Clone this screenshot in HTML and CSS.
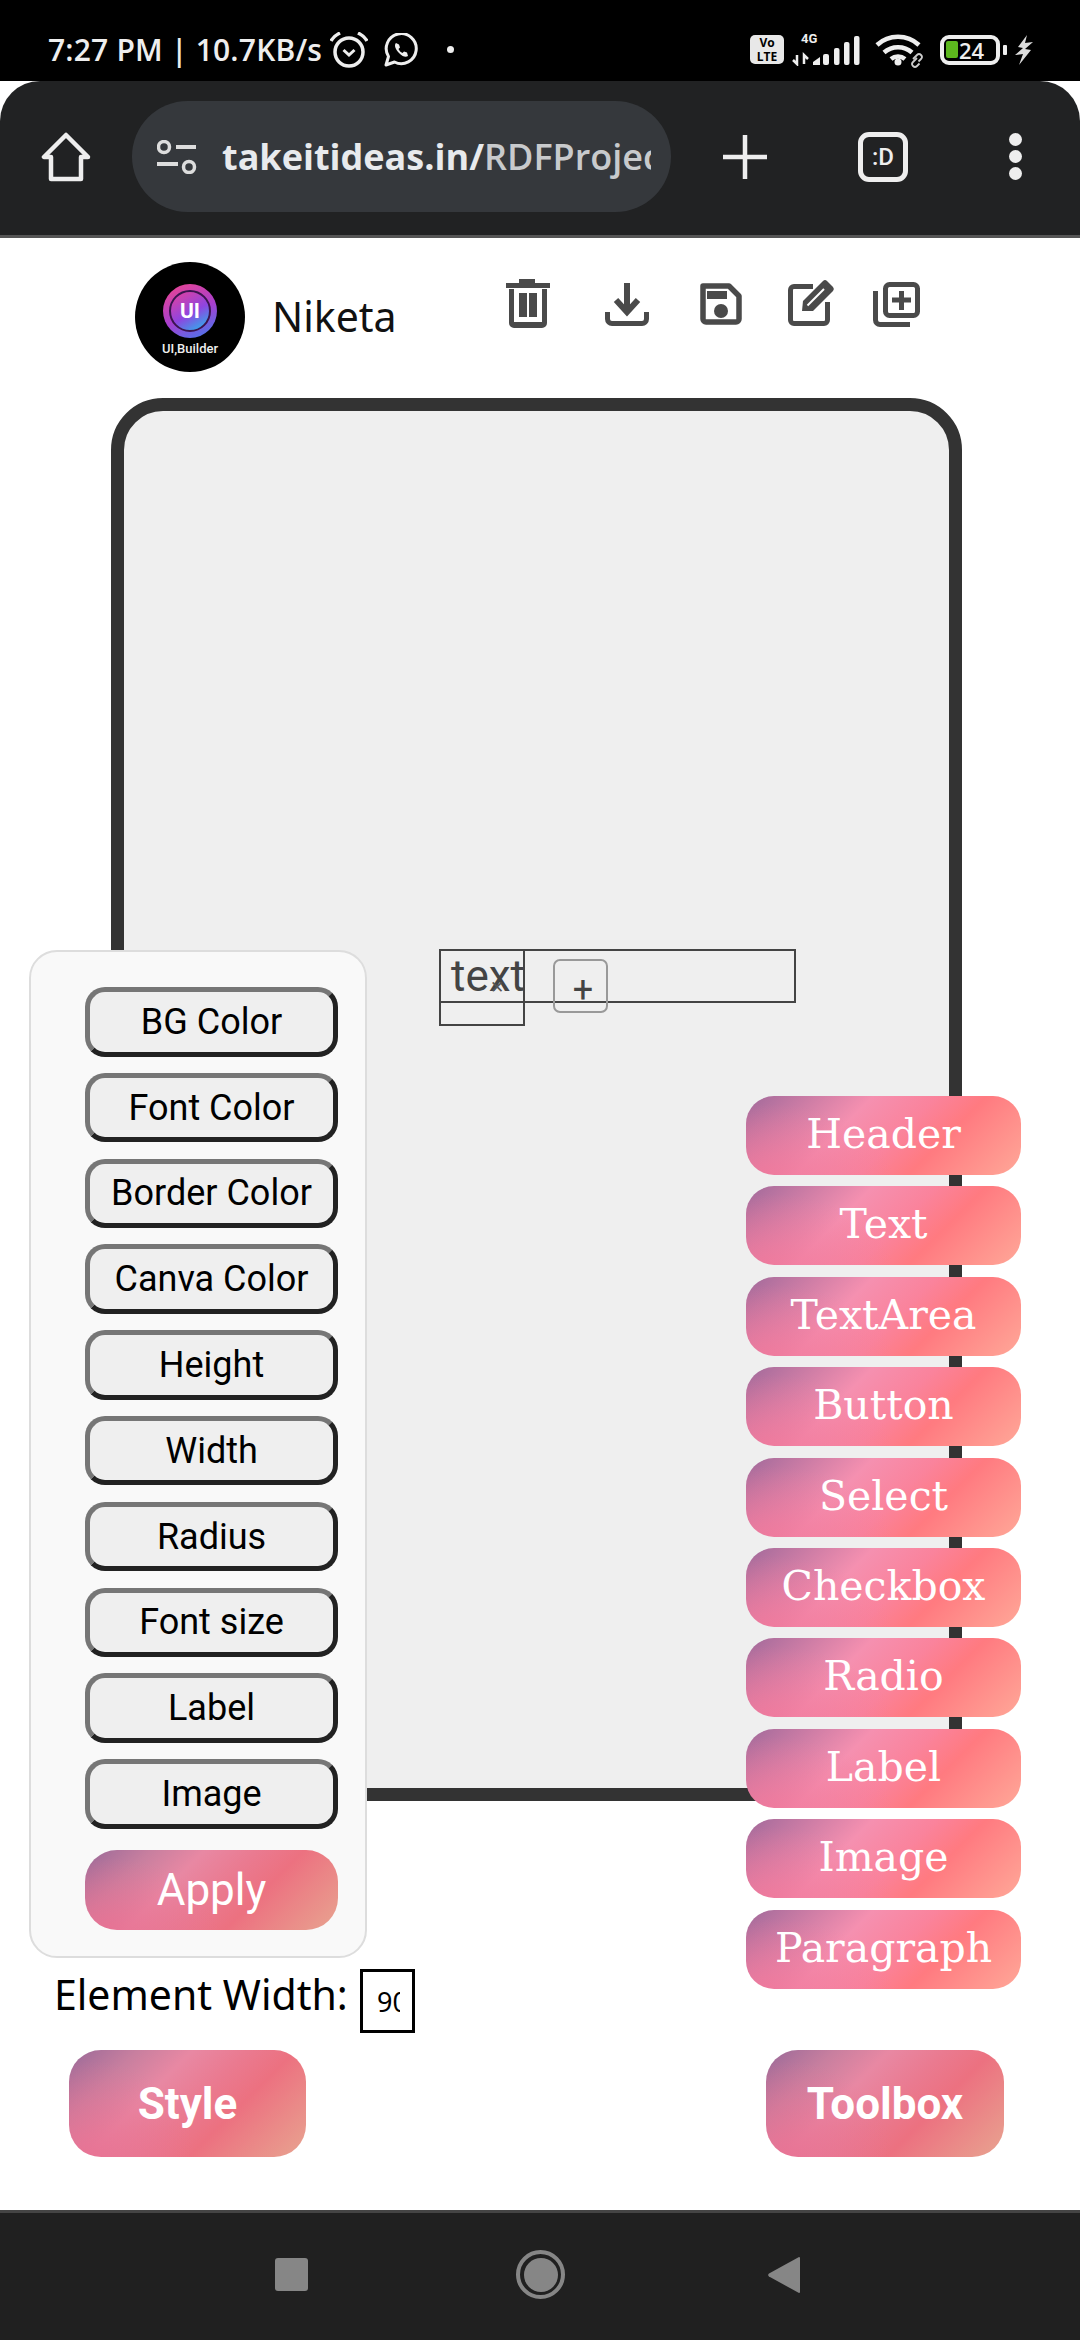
FILE: index.html
```html
<!DOCTYPE html>
<html>
	<head>
		<meta charset="UTF-8">
		<title>UI Builder</title>
		<link rel="stylesheet" href="styles.css">
	</head>
	<body>
		<div class="status">
			<div class="status-left">
				<span class="status-text">7:27 PM | 10.7KB/s</span>
				<svg class="ic-alarm" viewBox="0 0 38 36" width="38" height="36"><circle cx="19" cy="20" r="14" fill="none" stroke="#eee" stroke-width="3.500"/><path d="M13.500 18l5.500 5 5.500-5" fill="none" stroke="#eee" stroke-width="3"/><path d="M1 9C3 5 6 3 10 1M37 9C35 5 32 3 28 1" stroke="#eee" stroke-width="3.500" fill="none"/></svg>
				<svg class="ic-wa" viewBox="0 0 34 34" width="34" height="34"><path d="M2 32l2.500-8.500A15 15 0 1 1 10.500 29z" fill="none" stroke="#eee" stroke-width="3" stroke-linejoin="round"/><path d="M12 10c-2 2-1 6 3 10s7 4.500 9 3l-1-3.500-3-1-1.500 1.500c-2-1-3-2-4-4l1.500-1.500-1-3z" fill="#eee"/></svg>
				<span class="status-dot"></span>
			</div>
			<div class="status-right">
				<span class="volte"><span>Vo</span><span>LTE</span></span>
				<div class="signal">
					<span class="net">4G</span>
					<svg viewBox="0 0 70 32" width="70" height="32"><path d="M5 21v9L1 26M5 21v9M12 30v-9l4 4" stroke="#eee" stroke-width="2.500" fill="none"/><path d="M21 31v-3l7-5v8z" fill="#eee"/><rect x="31" y="20" width="6" height="11" rx="2" fill="#eee"/><rect x="42" y="14" width="5.500" height="17" rx="2" fill="#eee"/><rect x="52" y="8" width="5.500" height="23" rx="2" fill="#eee"/><rect x="62" y="2" width="5.500" height="29" rx="2" fill="#eee"/></svg>
				</div>
				<svg class="ic-wifi" viewBox="0 0 50 36" width="50" height="36"><path d="M2 13a31 31 0 0 1 42 0M9 20.500a21 21 0 0 1 28 0M16 27a11 11 0 0 1 14 0" fill="none" stroke="#eee" stroke-width="4.500"/><circle cx="23" cy="30" r="3.500" fill="#eee"/><path d="M38 27l4-4a2.800 2.800 0 0 1 4 4l-2.500 2.500M42 26l-4 4a2.800 2.800 0 0 0 4 4l2.500-2.500" fill="none" stroke="#ccc" stroke-width="1.800"/></svg>
				<div class="battery"><span class="battery-fill"></span><span class="battery-num">24</span></div>
				<span class="battery-nub"></span>
				<svg class="ic-bolt" viewBox="0 0 18 30" width="18" height="30"><path d="M12 0L3 12l5 1-8 7 8-1-4 11L16 15l-6-1 8-7-8 1z" fill="#ddd"/></svg>
			</div>
		</div>

		<div class="toolbar">
			<svg class="ic-home" viewBox="0 0 50 50" width="50" height="50"><path d="M25 3L3 25h7v22h30V25h7z" fill="none" stroke="#eee" stroke-width="4.500" stroke-linejoin="round"/></svg>
			<div class="urlbar">
				<svg class="ic-tune" viewBox="0 0 40 34" width="40" height="34"><circle cx="7" cy="7" r="5.500" fill="none" stroke="#ddd" stroke-width="3.500"/><path d="M19 7h20M0 24h21" stroke="#ddd" stroke-width="4"/><circle cx="32" cy="27" r="5.500" fill="none" stroke="#ddd" stroke-width="3.500"/></svg>
				<div class="url"><b>takeitideas.in/</b>RDFProject/index.html</div>
			</div>
			<svg class="ic-plus" viewBox="0 0 44 44" width="44" height="44"><path d="M22 0v44M0 22h44" stroke="#eee" stroke-width="4.500"/></svg>
			<div class="tabs">:D</div>
			<div class="dots"><span></span><span></span><span></span></div>
		</div>

		<div class="head">
			<div class="logo">
				<div class="logo-ring"><span>UI</span></div>
				<div class="logo-name">UI,Builder</div>
			</div>
			<div class="name">Niketa</div>
			<div class="actions">
				<svg class="act-trash" viewBox="0 0 44 49" width="44" height="49"><path d="M13 4V0h16v4h15v5H0V4z" fill="#4a4a4a"/><path d="M3 10v34a5 5 0 0 0 5 5h28a5 5 0 0 0 5-5V10h-5v33H8V10z" fill="#4a4a4a"/><path d="M13 14h8v24h-8zM23 14h8v24h-8z" fill="#4a4a4a"/></svg>
				<svg class="act-down" viewBox="0 0 44 43" width="44" height="43"><path d="M22 0v28M11 17l11 12 11-12" fill="none" stroke="#4a4a4a" stroke-width="6"/><path d="M2.500 29v7a4.500 4.500 0 0 0 4.500 4.500h30a4.500 4.500 0 0 0 4.500-4.500v-7" fill="none" stroke="#4a4a4a" stroke-width="5"/></svg>
				<svg class="act-save" viewBox="0 0 42 42" width="42" height="42"><path d="M3 3h26l10 10v23a3 3 0 0 1-3 3H6a3 3 0 0 1-3-3z" fill="none" stroke="#4a4a4a" stroke-width="5.500" stroke-linejoin="round"/><path d="M7 8h20v8H7z" fill="#4a4a4a"/><circle cx="21" cy="28" r="7" fill="#4a4a4a"/></svg>
				<svg class="act-edit" viewBox="0 0 48 48" width="48" height="48"><path d="M25 7.500H6A3.500 3.500 0 0 0 2.500 11v30A3.500 3.500 0 0 0 6 44.500h30a3.500 3.500 0 0 0 3.500-3.500V23" fill="none" stroke="#4a4a4a" stroke-width="5"/><path d="M14 32l1-10L35 2a3 3 0 0 1 4 0l6 6a3 3 0 0 1 0 4L25 32z" fill="#4a4a4a"/><path d="M19.500 26.500L36 10" stroke="#fff" stroke-width="2"/></svg>
				<svg class="act-copy" viewBox="0 0 47 45" width="47" height="45"><path d="M2.500 9v29a4.500 4.500 0 0 0 4.500 4.500h30" fill="none" stroke="#4a4a4a" stroke-width="5"/><rect x="12.500" y="2.500" width="32" height="31" rx="4" fill="none" stroke="#4a4a4a" stroke-width="5"/><path d="M28.500 9v19M19 18h19" stroke="#4a4a4a" stroke-width="5"/></svg>
			</div>
		</div>

		<div class="stage">
			<div class="canva">
				<div class="el el-wide"></div>
				<div class="el el-text">text</div>
				<span class="el-close">&#x2715;</span>
				<button class="el-add">+</button>
			</div>

			<div class="style-panel">
				<button class="opt">BG Color</button>
				<button class="opt">Font Color</button>
				<button class="opt">Border Color</button>
				<button class="opt">Canva Color</button>
				<button class="opt">Height</button>
				<button class="opt">Width</button>
				<button class="opt">Radius</button>
				<button class="opt">Font size</button>
				<button class="opt">Label</button>
				<button class="opt">Image</button>
				<button class="apply dim">Apply</button>
			</div>

			<div class="toolbox">
				<div class="tool grad">Header</div>
				<div class="tool grad">Text</div>
				<div class="tool grad">TextArea</div>
				<div class="tool grad">Button</div>
				<div class="tool grad">Select</div>
				<div class="tool grad">Checkbox</div>
				<div class="tool grad">Radio</div>
				<div class="tool grad">Label</div>
				<div class="tool grad">Image</div>
				<div class="tool grad">Paragraph</div>
			</div>
		</div>

		<div class="width-row">
			<label class="width-label">Element Width:</label>
			<input class="width-input" type="text" value="90">
		</div>

		<div class="foot">
			<button class="big dim">Style</button>
			<button class="big big-tool dim">Toolbox</button>
		</div>

		<div class="nav">
			<span class="nav-square"></span>
			<span class="nav-home"><span></span></span>
			<svg viewBox="0 0 32 38" width="32" height="38"><path d="M31 1a1 1 0 0 1 1 1v34a1 1 0 0 1-1 1L1 20.500a2 2 0 0 1 0-3z" fill="#868686"/></svg>
		</div>
	</body>
</html>
```

FILE: styles.css
```css
html, body {
	margin: 0;
	padding: 0;
}
body {
	width: 1080px;
	height: 2340px;
	overflow: hidden;
	background: #fff;
	font-family: Roboto, "Noto Sans", sans-serif;
	position: relative;
}
button {
	font-family: inherit;
	cursor: pointer;
}
svg {
	flex-shrink: 0;
}

/* status bar */
.status {
	height: 81px;
	background: #000;
	display: flex;
	justify-content: space-between;
	align-items: center;
	padding: 18px 47px 0 48px;
	box-sizing: border-box;
	color: #eee;
}
.status-left, .status-right {
	display: flex;
	align-items: center;
}
.status-text {
	font-family: "Open Sans", sans-serif;
	font-weight: 600;
	font-size: 30px;
	letter-spacing: 0.2px;
	width: 282px;
	white-space: nowrap;
}
.ic-wa {
	margin-left: 16px;
}
.status-dot {
	width: 7px;
	height: 7px;
	border-radius: 50%;
	background: #eee;
	margin-left: 29px;
}
.volte {
	width: 34px;
	height: 29px;
	background: #e8e8e8;
	color: #000;
	border-radius: 5px;
	font-family: "Open Sans", sans-serif;
	font-size: 12px;
	font-weight: 700;
	line-height: 14px;
	display: flex;
	flex-direction: column;
	align-items: center;
	justify-content: center;
}
.signal {
	margin-left: 8px;
	position: relative;
	height: 32px;
}
.net {
	position: absolute;
	left: 9px;
	top: -2px;
	font-size: 13px;
	line-height: 14px;
	font-weight: 700;
}
.ic-wifi {
	margin-left: 13px;
}
.battery {
	width: 60px;
	height: 30px;
	margin-left: 15px;
	border: 4px solid #eee;
	border-radius: 9px;
	box-sizing: border-box;
	display: flex;
	align-items: center;
	padding-left: 2px;
}
.battery-fill {
	width: 12px;
	height: 17px;
	background: #5cb81e;
	border-radius: 2px;
}
.battery-num {
	font-family: "Open Sans", sans-serif;
	font-size: 22px;
	font-weight: 600;
	margin-left: 1px;
}
.battery-nub {
	width: 4px;
	height: 10px;
	background: #eee;
	border-radius: 1px;
	margin-left: 3px;
}
.ic-bolt {
	margin-left: 8px;
}

/* browser toolbar */
.toolbar {
	height: 157px;
	background: #212223;
	border-radius: 40px 40px 0 0;
	border-bottom: 3px solid #555;
	box-sizing: border-box;
	display: flex;
	align-items: center;
	padding-bottom: 3px;
	padding-left: 41px;
}
.urlbar {
	width: 539px;
	height: 111px;
	margin-left: 41px;
	background: #35383c;
	border-radius: 56px;
	display: flex;
	align-items: center;
	padding: 0 20px 0 25px;
	box-sizing: border-box;
	flex-shrink: 0;
}
.url {
	margin-left: 25px;
	min-width: 0;
	font-family: "Open Sans", sans-serif;
	font-size: 36px;
	font-weight: 600;
	color: #c8cacc;
	white-space: nowrap;
	overflow: hidden;
}
.url b {
	color: #e8eaed;
	font-weight: 700;
}
.ic-plus {
	margin-left: 52px;
}
.tabs {
	width: 50px;
	height: 50px;
	margin-left: 91px;
	border: 5px solid #eee;
	border-radius: 11px;
	box-sizing: border-box;
	color: #eee;
	font-size: 24px;
	font-weight: 500;
	display: flex;
	align-items: center;
	justify-content: center;
}
.dots {
	margin-left: 101px;
	display: flex;
	flex-direction: column;
	gap: 4px;
}
.dots span {
	width: 13px;
	height: 13px;
	border-radius: 50%;
	background: #eee;
}

/* page head */
.head {
	height: 160px;
	display: flex;
	align-items: flex-start;
	padding-left: 135px;
	box-sizing: border-box;
}
.logo {
	width: 110px;
	height: 110px;
	margin-top: 24px;
	background: #000;
	border-radius: 50%;
	display: flex;
	flex-direction: column;
	align-items: center;
	padding-top: 22px;
	box-sizing: border-box;
}
.logo-ring {
	width: 54px;
	height: 54px;
	border-radius: 50%;
	background: linear-gradient(155deg, #f0458c, #a63fd0 55%, #3a7ff0);
	display: flex;
	align-items: center;
	justify-content: center;
	flex-shrink: 0;
}
.logo-ring span {
	width: 42px;
	height: 42px;
	border-radius: 50%;
	border: 2px solid #3b1450;
	box-sizing: border-box;
	background: linear-gradient(150deg, #e8409a, #8e45e0 55%, #1fc0ee);
	color: #fff;
	font-size: 21px;
	font-weight: 700;
	line-height: 38px;
	text-align: center;
}
.logo-name {
	color: #eee;
	font-size: 13px;
	font-weight: 500;
	line-height: 16px;
	margin-top: 3px;
	white-space: nowrap;
}
.name {
	width: 130px;
	margin-left: 27px;
	margin-top: 50px;
	font-family: "Noto Sans", sans-serif;
	font-size: 41px;
	color: #111;
}
.actions {
	margin-left: 104px;
	margin-top: 41px;
	display: flex;
	align-items: flex-start;
}
.act-down {
	margin-left: 55px;
	margin-top: 4px;
}
.act-save {
	margin-left: 51px;
	margin-top: 4px;
}
.act-edit {
	margin-left: 46px;
}
.act-copy {
	margin-left: 37px;
	margin-top: 3px;
}

/* canvas + floating panels */
.stage {
	position: relative;
	height: 1560px;
}
.canva {
	position: absolute;
	left: 111px;
	top: 0;
	width: 851px;
	height: 1403px;
	border: 13px solid #333;
	border-radius: 52px;
	background: #efefef;
	box-sizing: border-box;
}
.el {
	position: absolute;
	border: 2px solid #444;
	box-sizing: border-box;
	color: #444;
}
.el-wide {
	left: 315px;
	top: 538px;
	width: 357px;
	height: 54px;
}
.el-text {
	left: 315px;
	top: 538px;
	width: 86px;
	height: 77px;
	font-size: 44px;
	line-height: 50px;
	padding-left: 10px;
	white-space: nowrap;
}
.el-close {
	position: absolute;
	left: 366px;
	top: 566px;
	font-family: "DejaVu Sans", sans-serif;
	font-size: 17px;
	line-height: 20px;
	color: #555;
}
.el-add {
	position: absolute;
	left: 429px;
	top: 548px;
	width: 55px;
	height: 54px;
	padding: 8px 0 0 5px;
	border: 2px solid #999;
	border-radius: 7px;
	background: transparent;
	color: #444;
	font-size: 36px;
	line-height: 40px;
}

.style-panel {
	position: absolute;
	left: 29px;
	top: 552px;
	width: 338px;
	height: 1008px;
	background: #f9f9f9;
	border: 2px solid #ddd;
	border-radius: 28px;
	box-sizing: border-box;
	padding: 35px 27px 0 54px;
	display: flex;
	flex-direction: column;
	gap: 16.300px;
}
.opt {
	height: 69.500px;
	flex-shrink: 0;
	padding: 0;
	background: #efefef;
	border: 5px solid;
	border-color: #767676 #222 #222 #767676;
	border-radius: 20px;
	color: #000;
	font-size: 36px;
}

/* the pink band that every coloured button has */
.grad {
	background:
		radial-gradient(ellipse 45% 90% at 8% 100%, rgba(240, 120, 155, 0.85), rgba(240, 120, 155, 0)),
		linear-gradient(135deg, #a76c9c 3%, #d07ea6 20%, #f590b0 36%, #fa839c 54%, #ff7a80 68%, #ffa898 100%);
	color: #fff;
	border: 0;
}
.dim {
	background:
		radial-gradient(ellipse 45% 90% at 8% 100%, rgba(232, 112, 146, 0.85), rgba(232, 112, 146, 0)),
		linear-gradient(135deg, #a06c99 3%, #c87f9f 20%, #e888a3 36%, #ea7a90 52%, #ec7180 66%, #e8a490 100%);
	color: #fff;
	border: 0;
}
.apply {
	height: 80px;
	margin-top: 5px;
	border-radius: 32px;
	font-size: 44px;
	padding: 0;
	flex-shrink: 0;
}

.toolbox {
	position: absolute;
	left: 746px;
	top: 698px;
	width: 275px;
	display: flex;
	flex-direction: column;
	gap: 11.400px;
}
.tool {
	height: 79px;
	border-radius: 28px;
	font-family: "DejaVu Serif", serif;
	font-size: 41px;
	line-height: 77px;
	text-align: center;
}

/* element width */
.width-row {
	height: 64px;
	margin-top: 11px;
	padding-left: 54px;
	display: flex;
	align-items: flex-start;
}
.width-label {
	font-family: "Noto Sans", sans-serif;
	font-size: 41px;
	line-height: 50px;
	color: #000;
	width: 306px;
	white-space: nowrap;
}
.width-input {
	width: 55px;
	height: 64px;
	border: 3px solid #000;
	box-sizing: border-box;
	padding: 0 12px 0 14px;
	font-family: "Noto Sans", sans-serif;
	font-size: 27px;
	color: #000;
	background: #fff;
	outline: none;
}

/* bottom buttons */
.foot {
	margin-top: 17px;
	display: flex;
	padding-left: 69px;
}
.big {
	width: 237px;
	height: 107px;
	padding: 0;
	border-radius: 32px;
	font-size: 44px;
	font-weight: 700;
}
.big-tool {
	width: 238px;
	margin-left: 460px;
}

/* phone nav bar */
.nav {
	position: absolute;
	left: 0;
	right: 0;
	bottom: 0;
	height: 130px;
	background: #202020;
	border-top: 3px solid #444;
	box-sizing: border-box;
	display: flex;
	align-items: center;
	padding-left: 275px;
	padding-bottom: 4px;
}
.nav-square {
	width: 33px;
	height: 33px;
	background: #868686;
	border-radius: 3px;
}
.nav-home {
	width: 49px;
	height: 49px;
	margin-left: 208px;
	margin-right: 203px;
	border: 4px solid #868686;
	border-radius: 50%;
	box-sizing: border-box;
	display: flex;
	align-items: center;
	justify-content: center;
}
.nav-home span {
	width: 34px;
	height: 34px;
	border-radius: 50%;
	background: #868686;
}
```
